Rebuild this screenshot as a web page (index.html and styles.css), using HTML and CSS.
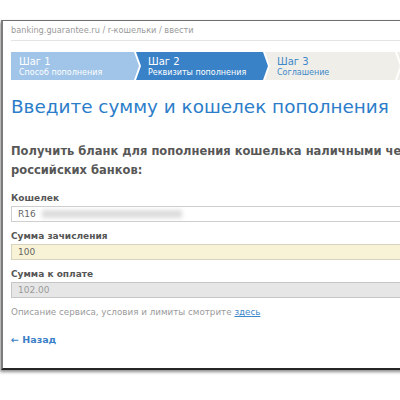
FILE: index.html
```html
<!DOCTYPE html>
<html lang="ru">
<head>
<meta charset="utf-8">
<title>Пополнение кошелька</title>
<link rel="stylesheet" href="styles.css">
</head>
<body>
<div class="frame">
  <div class="crumbs">banking.guarantee.ru / r-кошельки / ввести</div>
  <div class="steps">
    <div class="step step-done"><div class="step-num">Шаг 1</div><div class="step-name">Способ пополнения</div></div>
    <div class="step step-active"><div class="step-num">Шаг 2</div><div class="step-name">Реквизиты пополнения</div></div>
    <div class="step step-next"><div class="step-num">Шаг 3</div><div class="step-name">Соглашение</div></div>
    <div class="step step-next step-last"></div>
  </div>
  <h1 class="title">Введите сумму и кошелек пополнения</h1>
  <p class="lead">Получить бланк для пополнения кошелька наличными через кассы<br>российских банков:</p>
  <div class="form">
    <div class="label">Кошелек</div>
    <div class="field">R16<span class="blurred"></span></div>
    <div class="label">Сумма зачисления</div>
    <div class="field field-focus">100</div>
    <div class="label">Сумма к оплате</div>
    <div class="field field-disabled">102.00</div>
  </div>
  <p class="note">Описание сервиса, условия и лимиты смотрите <a class="link" href="#">здесь</a></p>
  <a class="back" href="#">← Назад</a>
</div>
</body>
</html>
```
FILE: styles.css
```css
html, body {
  margin: 0;
  padding: 0;
  background: #fff;
  overflow: hidden;
}
body {
  width: 400px;
  height: 400px;
  font-family: "DejaVu Sans", Verdana, sans-serif;
}
.frame {
  margin: 20px 0 0 1px;
  width: 520px;
  height: 347px;
  box-sizing: content-box;
  border-top: 1px solid #6e6e6e;
  border-left: 2px solid #7c7c7c;
  border-bottom: 2px solid #262626;
  box-shadow: -1px 2px 3px rgba(0, 0, 0, 0.45);
  padding-left: 8px;
  background: #fff;
}
.crumbs {
  height: 19px;
  line-height: 19px;
  font-size: 8.2px;
  color: #9a9a9a;
  border-bottom: 1px solid #e4e4e4;
  white-space: nowrap;
}
.steps {
  display: flex;
  margin-top: 11px;
  height: 28px;
}
.step {
  flex: none;
  height: 28px;
  box-sizing: border-box;
  padding: 4px 0 0 12px;
  margin-left: -3px;
  clip-path: polygon(0 0, calc(100% - 5px) 0, 100% 50%, calc(100% - 5px) 100%, 0 100%, 5px 50%);
  white-space: nowrap;
}
.step-done {
  width: 128px;
  margin-left: 0;
  padding-left: 8px;
  background: #a0c5e8;
  color: #fff;
  clip-path: polygon(0 0, calc(100% - 5px) 0, 100% 50%, calc(100% - 5px) 100%, 0 100%);
}
.step-active {
  width: 132px;
  background: #3a82c8;
  color: #fff;
}
.step-next {
  width: 135px;
  background: #efeee8;
  color: #3c88ca;
}
.step-last {
  width: 120px;
}
.step-num {
  font-size: 10px;
  line-height: 12px;
}
.step-name {
  font-size: 8px;
  line-height: 10px;
}
.title {
  margin: 15px 0 0;
  font-size: 18.4px;
  line-height: 24px;
  font-weight: normal;
  color: #2b7dc9;
  white-space: nowrap;
}
.lead {
  margin: 23px 0 0;
  font-size: 11.5px;
  line-height: 19px;
  font-weight: bold;
  color: #575757;
  white-space: nowrap;
}
.form {
  display: flex;
  flex-direction: column;
  margin-top: 11px;
}
.label {
  font-size: 9px;
  line-height: 14px;
  font-weight: bold;
  color: #555;
}
.label + .field {
  margin-top: 1px;
}
.field + .label {
  margin-top: 7px;
}
.field {
  height: 16px;
  box-sizing: border-box;
  border: 1px solid #cfcfcf;
  padding-left: 6px;
  font-size: 9px;
  line-height: 14px;
  color: #666;
  display: flex;
  align-items: center;
}
.blurred {
  display: inline-block;
  width: 140px;
  height: 8px;
  margin-left: 6px;
  background: #dcdcdc;
  filter: blur(2px);
}
.field-focus {
  background: #f8f3d6;
  border-color: #d7d3bd;
}
.field-disabled {
  background: #e6e6e6;
  border-color: #c6c6c6;
  color: #9a9a9a;
}
.note {
  margin: 7px 0 0;
  font-size: 8.75px;
  line-height: 14px;
  color: #9a9a9a;
}
.link {
  color: #3a87c9;
  text-decoration: underline;
}
.back {
  display: inline-block;
  margin-top: 14px;
  font-size: 9.5px;
  line-height: 14px;
  font-weight: bold;
  color: #3a7fc8;
  text-decoration: none;
}
```
